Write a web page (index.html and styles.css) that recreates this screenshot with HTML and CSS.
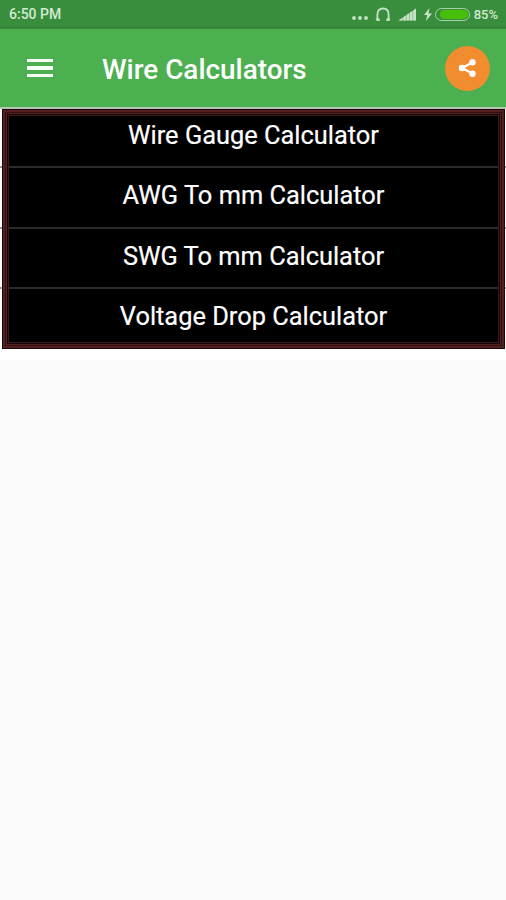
FILE: index.html
```html
<!DOCTYPE html>
<html lang="en">

<head>
  <meta charset="UTF-8" />
  <meta name="viewport" content="width=device-width, initial-scale=1.0" />
  <title>Wire Calculators</title>
  <link rel="stylesheet" href="styles.css">
</head>

<body>

  <div class="status-bar">
    <span class="time">6:50 PM</span>
    <div class="status-icons">
      <svg class="dots" width="16" height="4" viewBox="0 0 16 4">
        <circle cx="2" cy="2" r="1.9" />
        <circle cx="8" cy="2" r="1.9" />
        <circle cx="14" cy="2" r="1.9" />
      </svg>
      <svg class="headphones" width="16" height="15" viewBox="0 0 16 15">
        <path d="M2.400 13V7.500C2.400 3.300 4.500 1.500 8 1.500S13.600 3.300 13.600 7.500V13" fill="none" stroke="#c5e3c6" stroke-width="1.8" />
        <path d="M0.500 11.500h4.200v2.500h-3zM15.500 11.500h-4.200v2.500h3z" />
      </svg>
      <svg class="signal" width="19" height="13" viewBox="0 0 19 13">
        <path class="signal-ramp" d="M0.500 12.500L18 0.500v12z" />
        <path d="M0.500 12.500l4-2.800v2.800zM5.300 12.500V9.200l2.500-1.700v5zM8.600 12.500V7l2.500-1.700v7.200zM11.900 12.500V4.700l2.500-1.700v9.500zM15.200 12.500V2.500L18 0.500v12z" />
      </svg>
      <svg class="bolt" width="8" height="13" viewBox="0 0 8 13">
        <path d="M5.500 0L0 7h3.200L2 13l6-7.500H4.500z" />
      </svg>
      <div class="battery">
        <div class="battery-level"></div>
      </div>
    </div>
    <span class="percent">85%</span>
  </div>

  <div class="header">
    <div class="menu-icon">
      <span></span>
      <span></span>
      <span></span>
    </div>
    <h1>Wire Calculators</h1>
    <div class="share-btn">
      <svg width="20" height="20" viewBox="0 0 20 20">
        <path d="M14.500 4.500L4 10l10.500 5.500" fill="none" stroke="#fff" stroke-width="2.400" />
        <circle cx="14.500" cy="4.300" r="3.200" />
        <circle cx="4" cy="10" r="3.300" />
        <circle cx="14.500" cy="15.700" r="3.200" />
      </svg>
    </div>
  </div>

  <div class="main-container">
    <div class="list">
      <div class="list-item">Wire Gauge Calculator</div>
      <div class="list-item">AWG To mm Calculator</div>
      <div class="list-item">SWG To mm Calculator</div>
      <div class="list-item">Voltage Drop Calculator</div>
    </div>
  </div>

</body>

</html>
```
FILE: styles.css
```css
body {
  margin: 0;
  font-family: Roboto, sans-serif;
  background: #fafafa;
  min-height: 100vh;
}

.status-bar {
  display: flex;
  align-items: center;
  box-sizing: border-box;
  height: 29px;
  padding: 0 8px 1px 9px;
  background: linear-gradient(#388e3c 26px, #327e36 28px, #3f9644);
  color: #d3ead3;
  font-size: 13px;
  font-weight: 500;
}

.time {
  font-size: 14px;
}

.status-icons {
  display: flex;
  align-items: center;
  margin-left: auto;
}

.status-icons svg {
  fill: #c5e3c6;
}

.dots {
  margin: 8px 7px 0 0;
}

.headphones {
  margin-right: 7px;
}

.signal {
  margin-right: 7px;
}

.signal .signal-ramp {
  fill: #86be88;
}

.bolt {
  margin-right: 3px;
}

.battery {
  box-sizing: border-box;
  width: 35px;
  height: 13px;
  padding: 1px 1px 1px 4px;
  border: 1.5px solid #a5d3a2;
  border-radius: 7px;
  margin-right: 4px;
}

.battery-level {
  height: 100%;
  border-radius: 5px;
  background: #46be0a;
}

.header {
  display: flex;
  align-items: center;
  box-sizing: border-box;
  height: 78px;
  padding: 0 16px 0 27px;
  background: #4caf50;
}

.menu-icon {
  display: flex;
  flex-direction: column;
  gap: 4px;
  width: 26px;
}

.menu-icon span {
  height: 3.5px;
  background: #f4fff4;
}

.header h1 {
  margin: 4px 0 0 49px;
  color: #fff;
  font-size: 27.900px;
  line-height: 32px;
  font-weight: 500;
  white-space: nowrap;
}

.share-btn {
  display: flex;
  align-items: center;
  justify-content: center;
  width: 45px;
  height: 45px;
  margin-left: auto;
  border-radius: 50%;
  background: #f18d2f;
}

.share-btn svg {
  fill: #fff;
}

.main-container {
  padding: 0 1px 11px 2px;
  border-top: 2px solid #b5c4b3;
  /* row lines run on past the card to the screen edge */
  background: linear-gradient(#999, #999) 0 57px / 100% 2px no-repeat,
    linear-gradient(#999, #999) 0 118px / 100% 2px no-repeat,
    linear-gradient(#999, #999) 0 178px / 100% 2px no-repeat,
    #fff;
}

.list {
  box-sizing: border-box;
  height: 240px;
  background: linear-gradient(#2b2b2b, #2b2b2b) 0 57px / 100% 2px no-repeat,
    linear-gradient(#2b2b2b, #2b2b2b) 0 118px / 100% 2px no-repeat,
    linear-gradient(#2b2b2b, #2b2b2b) 0 178px / 100% 2px no-repeat,
    #000;
  box-shadow: inset 0 0 0 1px #1c0506,
    inset 0 0 0 3px #54201f,
    inset 0 0 0 4px #331011,
    inset 0 0 0 5px #54201f,
    inset 0 0 0 6px #1a0608,
    inset 0 0 0 7px #3a1a1e;
}

.list-item {
  height: 60.400px;
  color: #fff;
  font-size: 25.400px;
  line-height: 52px;
  text-align: center;
  -webkit-text-stroke: 0.2px #fff;
}
```
